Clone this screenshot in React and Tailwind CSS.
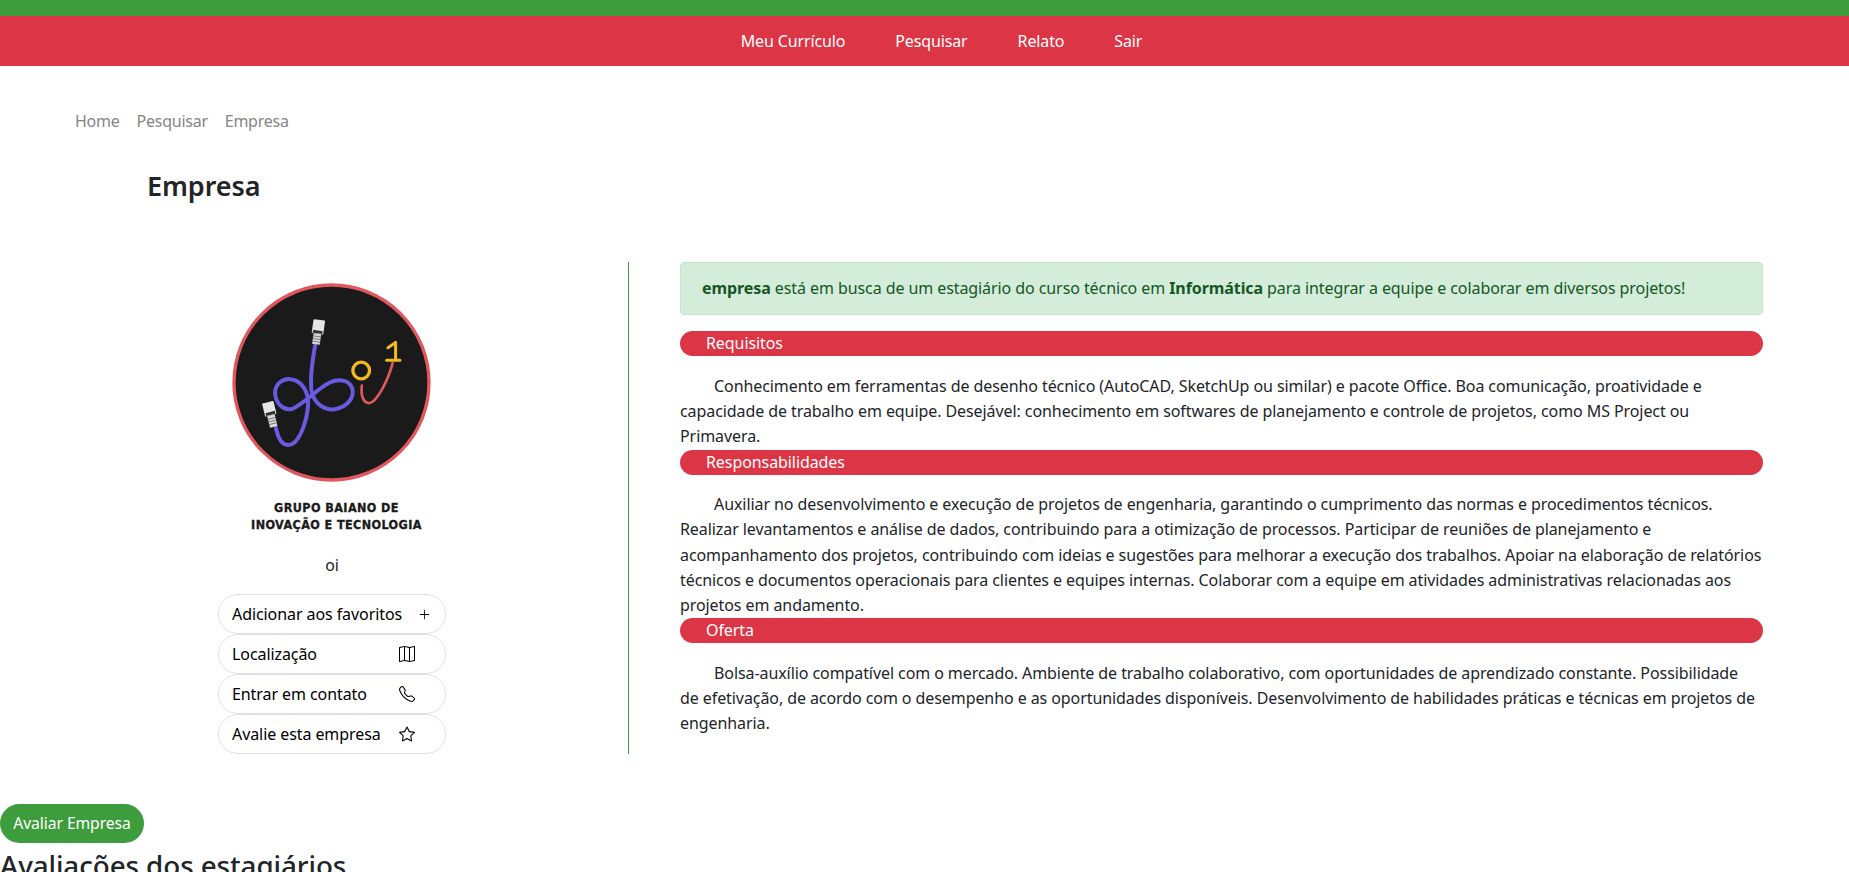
import { BsPlusLg, BsMap, BsTelephone, BsStar } from 'react-icons/bs'

const actions = [
  { label: 'Adicionar aos favoritos', icon: BsPlusLg, iconClass: 'w-[13px] h-[13px]' },
  { label: 'Localização', icon: BsMap, iconClass: 'w-4 h-4' },
  { label: 'Entrar em contato', icon: BsTelephone, iconClass: 'w-4 h-4' },
  { label: 'Avalie esta empresa', icon: BsStar, iconClass: 'w-4 h-4' },
]

const sections = [
  {
    title: 'Requisitos',
    text: 'Conhecimento em ferramentas de desenho técnico (AutoCAD, SketchUp ou similar) e pacote Office. Boa comunicação, proatividade e capacidade de trabalho em equipe. Desejável: conhecimento em softwares de planejamento e controle de projetos, como MS Project ou Primavera.',
  },
  {
    title: 'Responsabilidades',
    text: 'Auxiliar no desenvolvimento e execução de projetos de engenharia, garantindo o cumprimento das normas e procedimentos técnicos. Realizar levantamentos e análise de dados, contribuindo para a otimização de processos. Participar de reuniões de planejamento e acompanhamento dos projetos, contribuindo com ideias e sugestões para melhorar a execução dos trabalhos. Apoiar na elaboração de relatórios técnicos e documentos operacionais para clientes e equipes internas. Colaborar com a equipe em atividades administrativas relacionadas aos projetos em andamento.',
  },
  {
    title: 'Oferta',
    text: 'Bolsa-auxílio compatível com o mercado. Ambiente de trabalho colaborativo, com oportunidades de aprendizado constante. Possibilidade de\u00a0efetivação, de acordo com o desempenho e as oportunidades disponíveis. Desenvolvimento de habilidades práticas e técnicas em projetos de engenharia.',
  },
]

function Logo() {
  return (
    <svg viewBox="97 38 596 596" className="w-[199px] h-[199px] block" fill="none" strokeLinecap="round" strokeLinejoin="round">
      <circle cx="395" cy="336" r="292" fill="#1a1a1a" stroke="#e0585e" strokeWidth="10" />
      {/* cable */}
      <path
        d="M346 225 C338 270 330 320 335 360 C342 400 375 420 405 416 C440 410 462 385 458 358 C452 330 420 322 390 336 C355 352 320 395 280 414 C250 424 226 395 226 365 C228 338 250 324 272 326 C300 328 322 355 325 390 C326 430 310 490 285 515 C265 532 245 522 235 495 L228 472"
        stroke="#6a5ae0"
        strokeWidth="12"
      />
      {/* yellow o and 1 */}
      <circle cx="484" cy="300" r="25" stroke="#f6b91e" strokeWidth="10" />
      <path d="M564 232 L587 216 L587 268 M560 269 L600 269" stroke="#f6b91e" strokeWidth="9" />
      {/* red i */}
      <path d="M486 345 C482 375 490 398 508 398 C530 395 565 330 578 278" stroke="#e0585e" strokeWidth="8" />
      {/* top connector */}
      <g transform="rotate(8 353 185)">
        <rect x="336" y="148" width="35" height="42" rx="2" fill="#e6e6e6" />
        <rect x="339" y="180" width="29" height="9" fill="#333" />
        <rect x="342" y="190" width="23" height="32" fill="#d8d8d8" />
        <path d="M342 198h23M342 206h23M342 214h23" stroke="#555" strokeWidth="2" />
      </g>
      {/* bottom connector */}
      <g transform="rotate(-14 213 430)">
        <rect x="195" y="394" width="35" height="40" rx="2" fill="#e6e6e6" />
        <rect x="198" y="424" width="29" height="9" fill="#333" />
        <rect x="201" y="434" width="23" height="36" fill="#d8d8d8" />
        <path d="M201 444h23M201 452h23M201 460h23" stroke="#555" strokeWidth="2" />
      </g>
    </svg>
  )
}

export default function App() {
  return (
    <div className="h-screen overflow-hidden bg-white text-[#212529] font-['Noto_Sans',sans-serif] text-[16px] leading-[25.2px] tracking-[-0.08px]">
      {/* Top bars */}
      <div className="h-4 bg-[#3d9c3b]" />
      <nav className="h-[50px] bg-[#dc3545] text-white flex items-center justify-center gap-[50px] pl-[34px] pt-[2px] tracking-[-0.13px]">
        <a>Meu Currículo</a>
        <a>Pesquisar</a>
        <a>Relato</a>
        <a>Sair</a>
      </nav>

      {/* Breadcrumb */}
      <div className="flex gap-[17px] pl-[75px] pt-[43px] text-[#858585] tracking-[-0.25px]">
        <span>Home</span>
        <span>Pesquisar</span>
        <span>Empresa</span>
      </div>

      <h1 className="pl-[147px] mt-[32px] text-[27px] leading-[40px] font-semibold">Empresa</h1>

      <div className="flex mt-[56px]">
        {/* Left column */}
        <div className="w-[629px] shrink-0 border-r border-[#3d9c3b] flex flex-col items-center pt-[21px] pl-[34px]">
          <Logo />
          <div className="mt-[17px] ml-[11px] text-center text-[12.5px] leading-[17px] font-bold text-[#1a1a1a] tracking-[0.4px] [font-stretch:condensed] [-webkit-text-stroke:0.3px_#1a1a1a] font-['DejaVu_Sans',sans-serif]">
            GRUPO BAIANO DE
            <br />
            INOVAÇÃO E TECNOLOGIA
          </div>
          <p className="mt-[20px] mb-[16px] ml-[2px]">oi</p>
          <div className="w-[228px] ml-[2px]">
            {actions.map(({ label, icon: Icon, iconClass }) => (
              <button
                key={label}
                className="w-full h-10 flex items-center pl-[13px] rounded-full border border-[#dee2e6] text-black"
              >
                <span className="min-w-[151px] text-left whitespace-nowrap">{label}</span>
                <Icon className={`ml-4 shrink-0 ${iconClass}`} />
              </button>
            ))}
          </div>
        </div>

        {/* Right column */}
        <div className="w-[1134px] pl-[51px]">
          <div className="h-[53px] flex items-center px-[21px] rounded bg-[#d4edda] border border-[#c3e6cb] text-[#155724]">
            <p>
              <b>empresa</b> está em busca de um estagiário do curso técnico em <b>Informática</b> para integrar a equipe e colaborar em diversos projetos!
            </p>
          </div>
          <div className="mt-4">
            {sections.map((s) => (
              <section key={s.title}>
                <h2 className="pl-[26px] rounded-full bg-[#dc3545] text-white font-normal">{s.title}</h2>
                <p className="mt-[17.5px] indent-[34px]">{s.text}</p>
              </section>
            ))}
          </div>
        </div>
      </div>

      <button className="block mt-[50px] h-[39px] w-[144px] rounded-full bg-[#3d9c3b] text-white text-[15.7px]">Avaliar Empresa</button>
      <h2 className="text-[27.8px] leading-[44px] font-medium">Avaliações dos estagiários</h2>
    </div>
  )
}
